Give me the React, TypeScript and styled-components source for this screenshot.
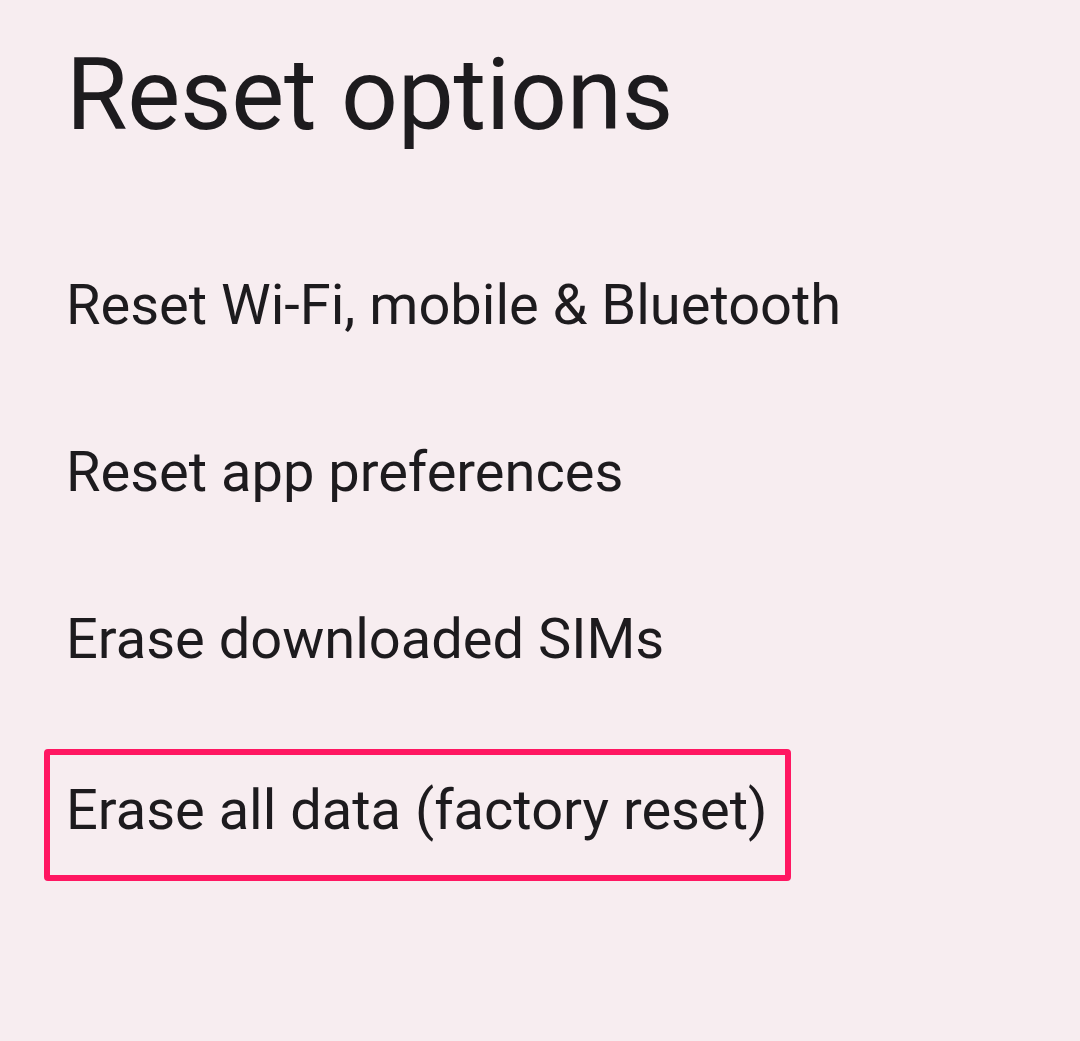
import React from "react";
import styled, { createGlobalStyle } from "styled-components";

const Global = createGlobalStyle`
  html, body {
    margin: 0;
    padding: 0;
    background: #f7edf0;
  }
  body {
    font-family: Roboto, "Open Sans", sans-serif;
    color: #1d1b1e;
  }
`;

const Page = styled.main`
  display: flex;
  flex-direction: column;
  min-height: 1041px;
  padding: 0 0 0 66px;
  box-sizing: border-box;
`;

const Title = styled.h1`
  margin: 0;
  padding-top: 40px;
  font-size: 100px;
  font-weight: 400;
  line-height: 110px;
  letter-spacing: -0.3px;
`;

const List = styled.ul`
  list-style: none;
  margin: 0;
  padding: 125px 0 0 0;
  display: flex;
  flex-direction: column;
  align-items: flex-start;
`;

const Item = styled.li<{ $highlight?: boolean }>`
  font-size: 56px;
  line-height: 60px;
  padding: ${(p) => (p.$highlight ? "25px 17px 35px 16px" : "0")};
  margin: ${(p) => (p.$highlight ? "-27px 0 0 -22px" : "0 0 60px 0")};
  border: ${(p) => (p.$highlight ? "6px solid #ff1762" : "none")};
  border-radius: 4px;
  height: ${(p) => (p.$highlight ? "auto" : "107px")};
`;

export default function App() {
  const items = [
    "Reset Wi-Fi, mobile & Bluetooth",
    "Reset app preferences",
    "Erase downloaded SIMs",
  ];
  return (
    <>
      <Global />
      <Page>
        <Title>Reset options</Title>
        <List>
          {items.map((t) => (
            <Item key={t}>{t}</Item>
          ))}
          <Item $highlight>Erase all data (factory reset)</Item>
        </List>
      </Page>
    </>
  );
}
